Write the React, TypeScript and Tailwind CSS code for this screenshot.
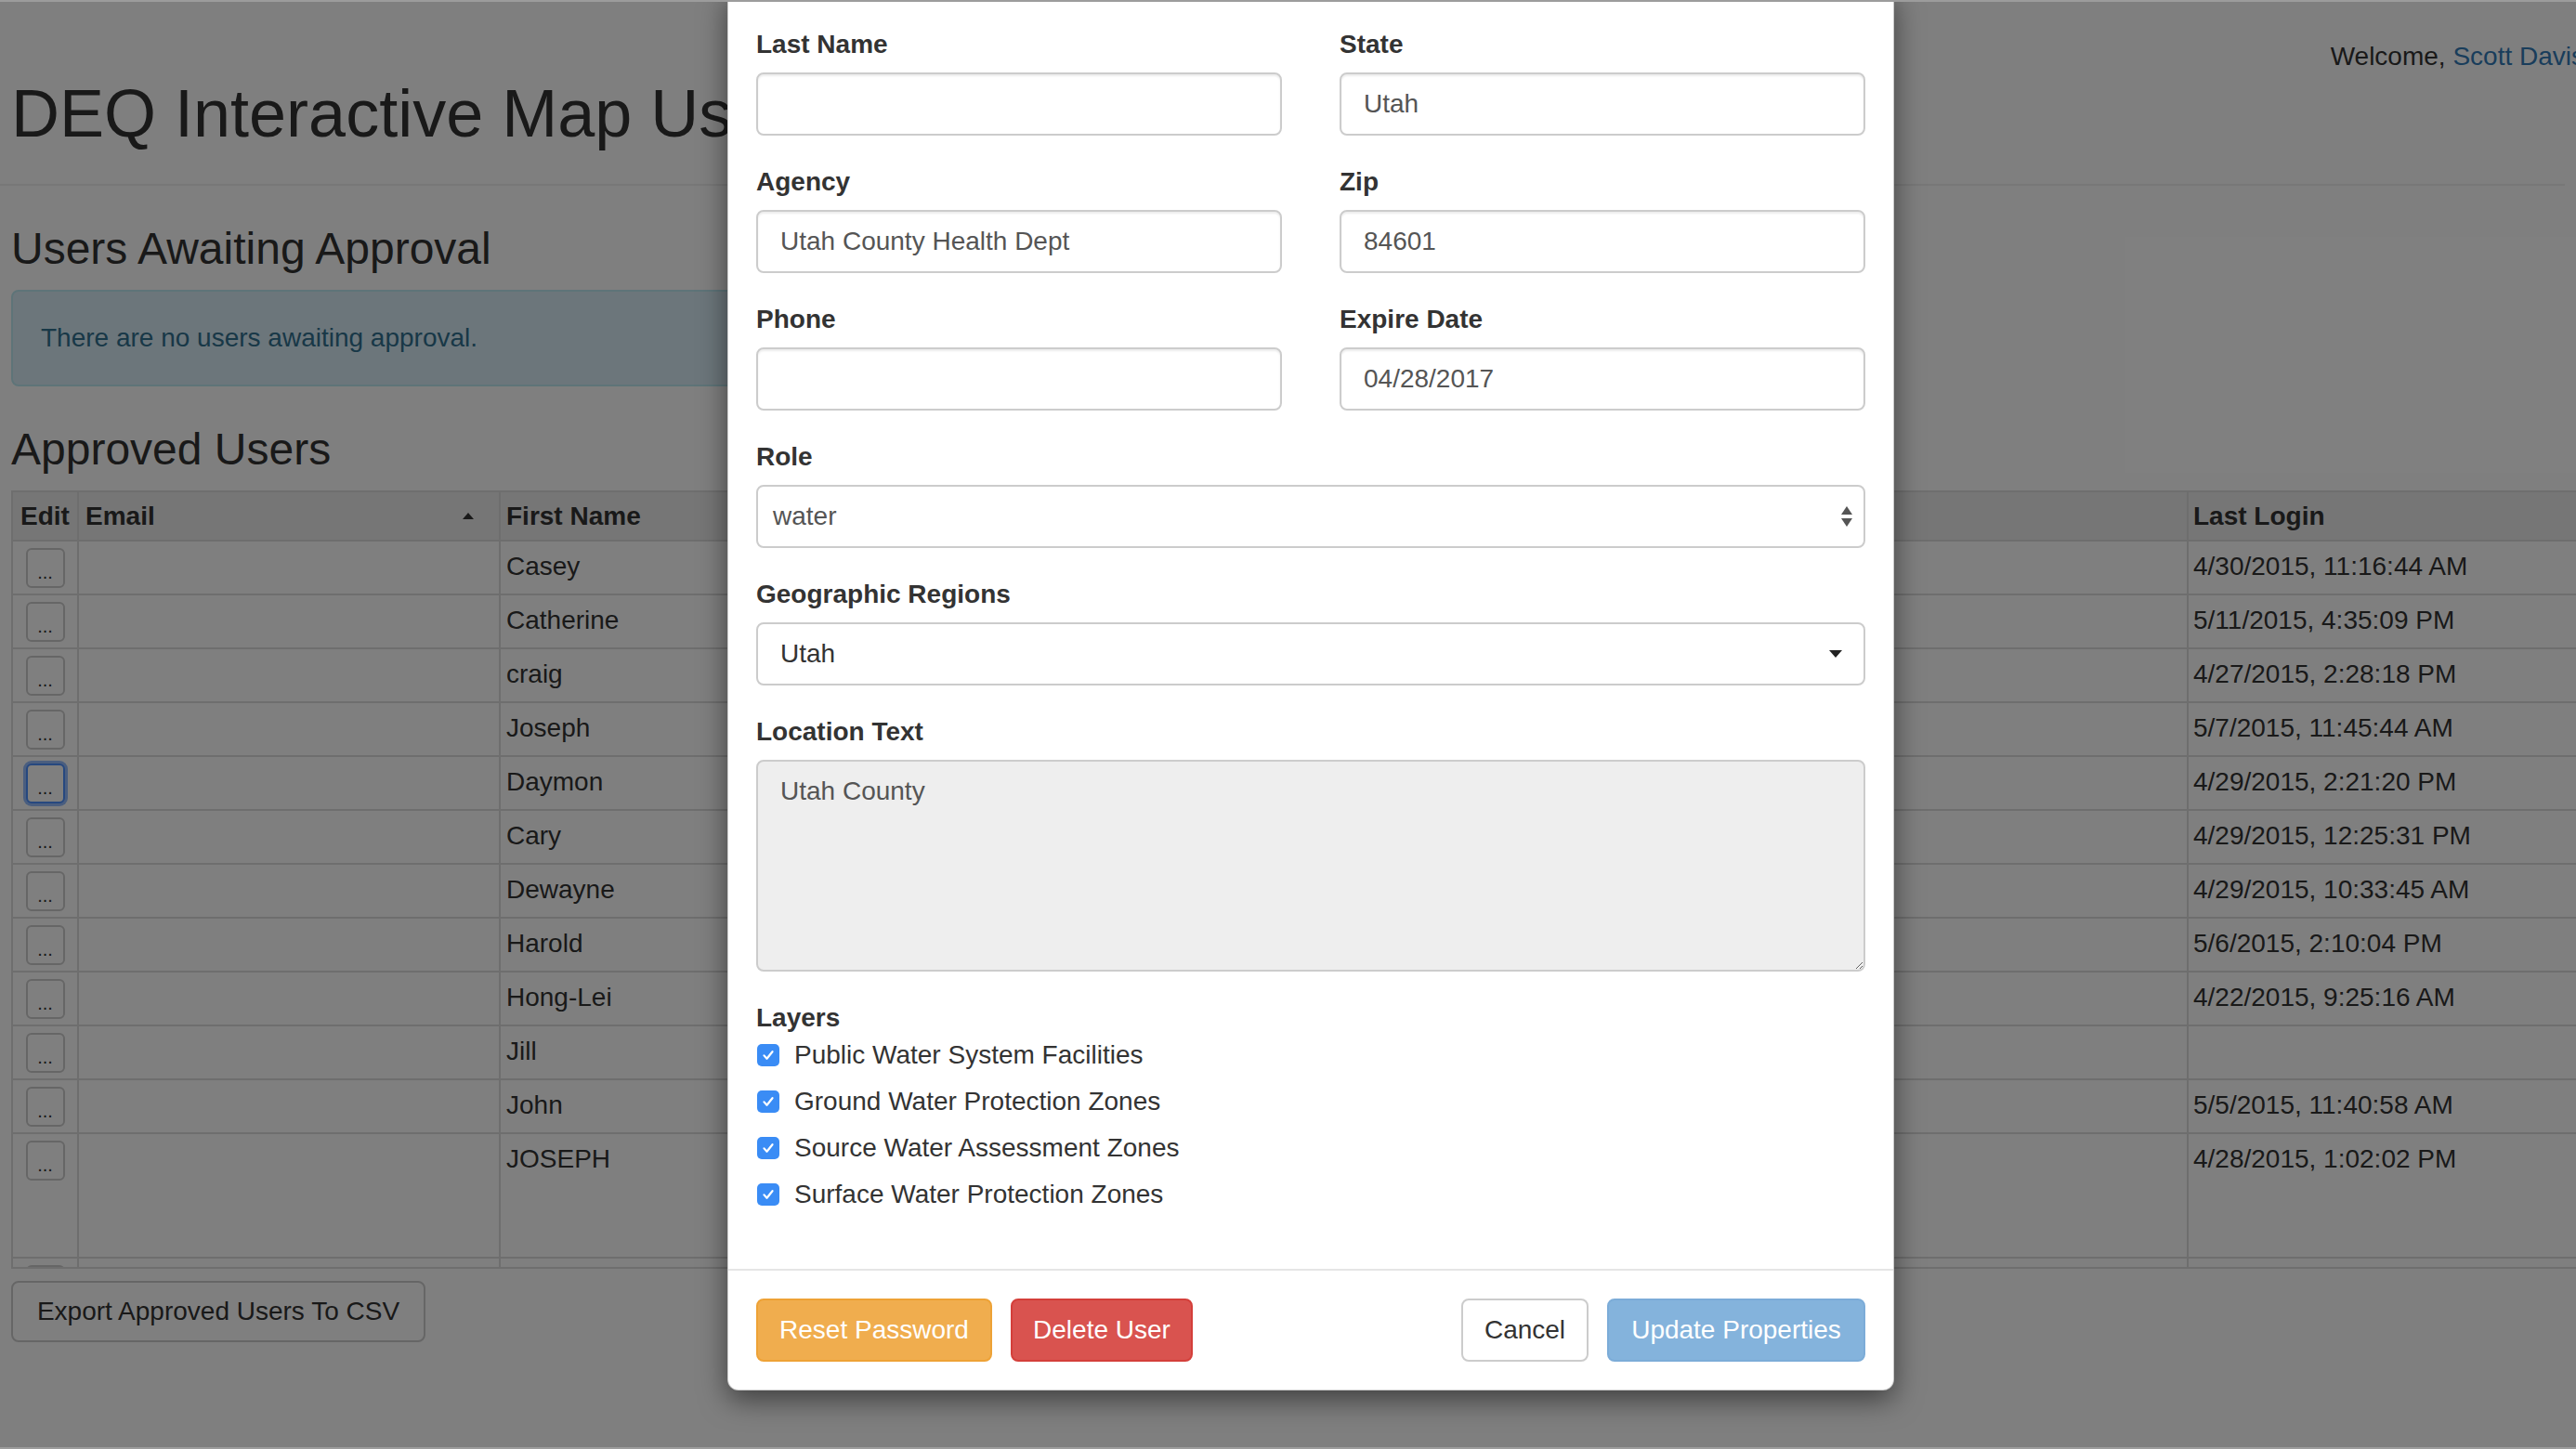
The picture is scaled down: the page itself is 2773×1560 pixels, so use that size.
import React from "react";

type ApprovedUser = {
  first: string;
  login: string;
  focused?: boolean;
  tall?: boolean;
  partial?: boolean;
};

const users: ApprovedUser[] = [
  { first: "Casey", login: "4/30/2015, 11:16:44 AM" },
  { first: "Catherine", login: "5/11/2015, 4:35:09 PM" },
  { first: "craig", login: "4/27/2015, 2:28:18 PM" },
  { first: "Joseph", login: "5/7/2015, 11:45:44 AM" },
  { first: "Daymon", login: "4/29/2015, 2:21:20 PM", focused: true },
  { first: "Cary", login: "4/29/2015, 12:25:31 PM" },
  { first: "Dewayne", login: "4/29/2015, 10:33:45 AM" },
  { first: "Harold", login: "5/6/2015, 2:10:04 PM" },
  { first: "Hong-Lei", login: "4/22/2015, 9:25:16 AM" },
  { first: "Jill", login: "" },
  { first: "John", login: "5/5/2015, 11:40:58 AM" },
  { first: "JOSEPH", login: "4/28/2015, 1:02:02 PM", tall: true },
  { first: "", login: "", partial: true },
];

const layers = [
  "Public Water System Facilities",
  "Ground Water Protection Zones",
  "Source Water Assessment Zones",
  "Surface Water Protection Zones",
];

function EditButton({ focused, empty }: { focused?: boolean; empty?: boolean }) {
  return (
    <button
      className={`mx-auto flex h-[43px] w-[42px] items-center justify-center rounded-[6px] border-2 bg-white text-[20px] leading-none text-[#333] ${
        focused ? "border-[#4d90fe] shadow-[0_0_0_3px_rgba(77,144,254,0.6)]" : "border-[#ccc]"
      }`}
    >
      {!empty && <span className="mt-[8px]">...</span>}
    </button>
  );
}

function UserRow({ user }: { user: ApprovedUser }) {
  return (
    <div className={`flex border-b-2 border-[#ddd] ${user.tall ? "h-[134px]" : "h-[58px]"}`}>
      <div className="w-[71px] shrink-0 border-r-2 border-[#ddd] pt-[7px]">
        <EditButton focused={user.focused} empty={user.partial} />
      </div>
      <div className="w-[454px] shrink-0 border-r-2 border-[#ddd]" />
      <div className="w-[461px] shrink-0 border-r-2 border-[#ddd] px-[6px] pt-[7px] leading-[40px]">{user.first}</div>
      <div className="w-[450px] shrink-0 border-r-2 border-[#ddd]" />
      <div className="w-[450px] shrink-0 border-r-2 border-[#ddd]" />
      <div className="w-[456px] shrink-0 border-r-2 border-[#ddd]" />
      <div className="w-[540px] shrink-0 px-[5px] pt-[7px] leading-[40px]">{user.login}</div>
    </div>
  );
}

function Field({ label, value }: { label: string; value: string }) {
  return (
    <div className="mb-[30px]">
      <div className="mb-[10px] text-[28px] font-bold leading-[40px] text-[#333]">{label}</div>
      <div className="flex h-[68px] items-center rounded-[8px] border-2 border-[#ccc] bg-white px-[24px] text-[28px] text-[#555] shadow-[inset_0_2px_2px_rgba(0,0,0,0.075)]">
        {value}
      </div>
    </div>
  );
}

function Checkbox() {
  return (
    <span className="flex h-[24px] w-[24px] shrink-0 items-center justify-center rounded-[5px] bg-[#3a8cf5]">
      <svg viewBox="0 0 24 24" className="h-[18px] w-[18px]" fill="none" stroke="white" strokeWidth="3" strokeLinecap="round" strokeLinejoin="round">
        <path d="M6 12.5l4 4.5 8-10" />
      </svg>
    </span>
  );
}

export default function App() {
  return (
    <div className="relative h-[1560px] w-[2773px] overflow-hidden bg-white font-['Liberation_Sans',Arial,sans-serif] text-[28px] text-[#333]">
      {/* page under the backdrop */}
      <div className="w-[2900px] pl-[12px]">
        <div className="mt-[41px] flex w-[2770px] justify-end leading-[40px]">
          <span>
            Welcome, <span className="text-[#337ab7]">Scott Davis</span>
          </span>
        </div>
        <h1 className="mt-[2px] text-[72px] font-normal leading-[79px]">DEQ Interactive Map Users</h1>
        <div className="mt-[36px] h-[2px] w-[2761px] -ml-[12px] bg-[#eee]" />

        <h3 className="mt-[41px] text-[48px] font-normal leading-[53px]">Users Awaiting Approval</h3>
        <div className="mt-[18px] h-[104px] w-[1400px] rounded-[8px] border-2 border-[#bce8f1] bg-[#d9edf7] px-[30px] py-[30px] leading-[40px] text-[#31708f]">
          There are no users awaiting approval.
        </div>

        <h3 className="mt-[41px] text-[48px] font-normal leading-[53px]">Approved Users</h3>
        <div className="mt-[18px] h-[838px] w-[2880px] overflow-hidden border-2 border-r-0 border-[#ddd]">
          <div className="flex h-[53px] items-center border-b-2 border-[#ddd] bg-[#ececec] font-bold leading-[40px]">
            <div className="flex h-full w-[71px] shrink-0 items-center border-r-2 border-[#ddd] px-[8px]">Edit</div>
            <div className="flex h-full w-[454px] shrink-0 items-center justify-between border-r-2 border-[#ddd] pl-[7px] pr-[27px]">
              <span>Email</span>
              <span className="h-0 w-0 border-x-[6.5px] border-b-[7px] border-x-transparent border-b-[#333]" />
            </div>
            <div className="flex h-full w-[461px] shrink-0 items-center border-r-2 border-[#ddd] px-[6px]">First Name</div>
            <div className="flex h-full w-[450px] shrink-0 items-center border-r-2 border-[#ddd] px-[6px]">Last Name</div>
            <div className="flex h-full w-[450px] shrink-0 items-center border-r-2 border-[#ddd] px-[6px]">Agency</div>
            <div className="flex h-full w-[456px] shrink-0 items-center border-r-2 border-[#ddd] px-[6px]">Role</div>
            <div className="flex h-full w-[540px] shrink-0 items-center px-[5px]">Last Login</div>
          </div>
          {users.map((u, i) => (
            <UserRow key={i} user={u} />
          ))}
        </div>

        <button className="mt-[13px] h-[66px] w-[446px] rounded-[8px] border-2 border-[#ccc] bg-white text-[28px] text-[#333]">
          Export Approved Users To CSV
        </button>
      </div>

      {/* backdrop */}
      <div className="absolute inset-0 bg-black/50" />

      {/* modal */}
      <div className="absolute left-[783px] top-[-12px] w-[1256px] rounded-[12px] border border-black/20 bg-white shadow-[0_10px_30px_rgba(0,0,0,0.5)]">
        <div className="px-[30px] pb-[30px] pt-[39px]">
          <div className="grid grid-cols-2 gap-x-[62px]">
            <Field label="Last Name" value="" />
            <Field label="State" value="Utah" />
            <Field label="Agency" value="Utah County Health Dept" />
            <Field label="Zip" value="84601" />
            <Field label="Phone" value="" />
            <Field label="Expire Date" value="04/28/2017" />
          </div>

          <div className="mb-[30px]">
            <div className="mb-[10px] text-[28px] font-bold leading-[40px]">Role</div>
            <div className="flex h-[68px] items-center justify-between rounded-[8px] border-2 border-[#ccc] bg-white pl-[16px] pr-[12px] text-[28px] text-[#555]">
              <span>water</span>
              <svg viewBox="0 0 12 22" className="h-[22px] w-[12px]" fill="#555">
                <path d="M6 0L12 9H0z" />
                <path d="M0 13h12L6 22z" />
              </svg>
            </div>
          </div>

          <div className="mb-[30px]">
            <div className="mb-[10px] text-[28px] font-bold leading-[40px]">Geographic Regions</div>
            <div className="flex h-[68px] items-center justify-between rounded-[8px] border-2 border-[#ccc] bg-white pl-[24px] pr-[23px] text-[28px] text-[#333]">
              <span>Utah</span>
              <span className="h-0 w-0 border-x-[7px] border-t-[8px] border-x-transparent border-t-[#222]" />
            </div>
          </div>

          <div className="mb-[30px]">
            <div className="mb-[10px] text-[28px] font-bold leading-[40px]">Location Text</div>
            <textarea
              readOnly
              value="Utah County"
              className="block h-[228px] w-full resize-y rounded-[8px] border-2 border-[#ccc] bg-[#eee] px-[24px] py-[12px] font-['Liberation_Sans',Arial,sans-serif] text-[28px] leading-[40px] text-[#555] outline-none"
            />
          </div>

          <div className="mb-[30px]">
            <div className="text-[28px] font-bold leading-[40px]">Layers</div>
            <div className="flex flex-col gap-[10px]">
              {layers.map((l) => (
                <label key={l} className="flex h-[40px] items-center gap-[16px] pl-[1px] leading-[40px]">
                  <Checkbox />
                  <span>{l}</span>
                </label>
              ))}
            </div>
          </div>
        </div>

        <div className="flex justify-between border-t-2 border-[#e5e5e5] p-[30px]">
          <div className="flex gap-[20px]">
            <button className="h-[68px] w-[254px] rounded-[8px] border-2 border-[#eea236] bg-[#f0ad4e] text-[28px] text-white">
              Reset Password
            </button>
            <button className="h-[68px] w-[196px] rounded-[8px] border-2 border-[#d43f3a] bg-[#d9534f] text-[28px] text-white">
              Delete User
            </button>
          </div>
          <div className="flex gap-[20px]">
            <button className="h-[68px] w-[137px] rounded-[8px] border-2 border-[#ccc] bg-white text-[28px] text-[#333]">
              Cancel
            </button>
            <button className="h-[68px] w-[278px] rounded-[8px] border-2 border-[#7cacd8] bg-[#84b3dc] text-[28px] text-white">
              Update Properties
            </button>
          </div>
        </div>
      </div>

      {/* window frame lines */}
      <div className="absolute inset-x-0 top-0 h-[2px] bg-[#9c9c9c]" />
      <div className="absolute inset-x-0 bottom-0 h-[2px] bg-[#9c9c9c]" />
    </div>
  );
}
